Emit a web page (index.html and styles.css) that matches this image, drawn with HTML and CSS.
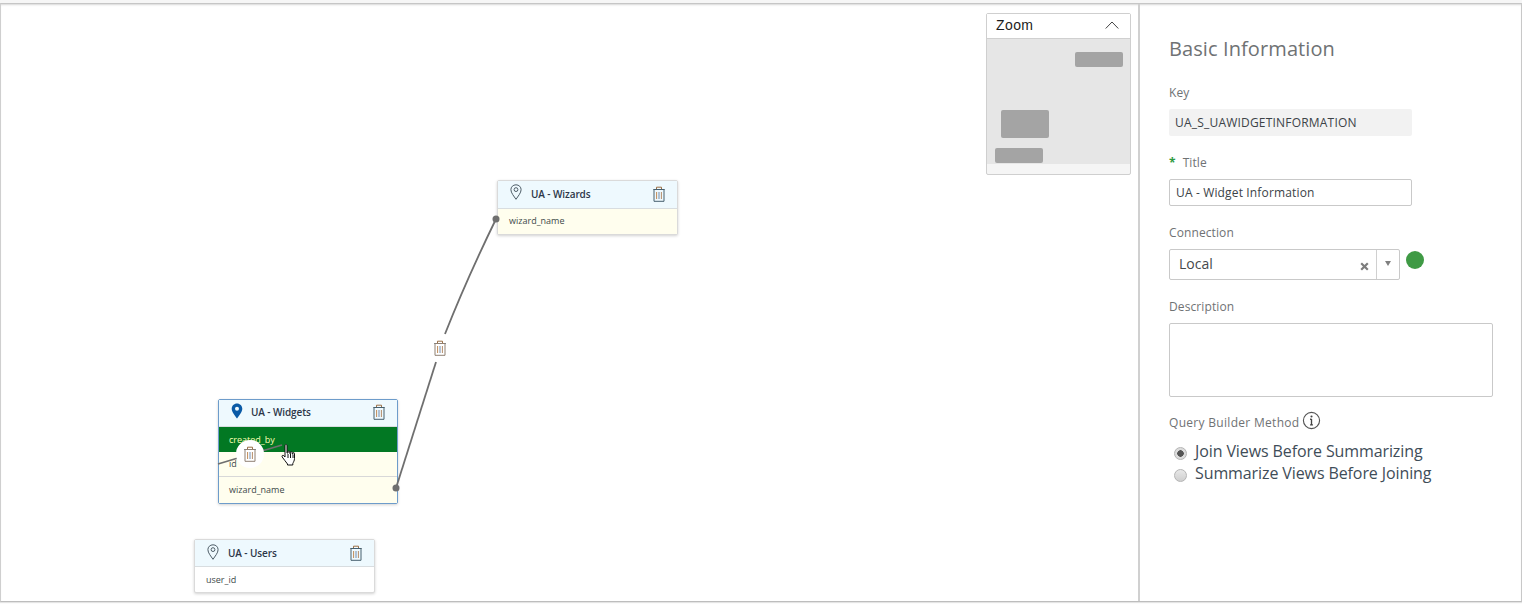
FILE: index.html
```html
<!DOCTYPE html>
<html lang="en">
<head>
<meta charset="utf-8">
<title>Query Builder</title>
<link rel="stylesheet" href="styles.css">
</head>
<body>
<svg width="0" height="0" class="defs" aria-hidden="true">
  <symbol id="trash" viewBox="0 0 14 16">
    <path d="M1 3.500h12" fill="none" stroke="#7f8c94" stroke-width="1"/>
    <path d="M4.500 3.500V1.200h5v2.300" fill="none" stroke="#9a6f45" stroke-width="1"/>
    <path d="M2 3.500h10v11.800H2z" fill="none" stroke="currentColor" stroke-width="1"/>
    <path d="M4.600 6v7" fill="none" stroke="#c08a55" stroke-width="1"/>
    <path d="M7 6v7" fill="none" stroke="#6f8cb0" stroke-width="1"/>
    <path d="M9.400 6v7" fill="none" stroke="#b58c6a" stroke-width="1"/>
  </symbol>
  <symbol id="pin" viewBox="0 0 12 16">
    <path d="M6 .8C3 .8.900 3 .900 5.700c0 3.200 3.200 6.700 5.100 9.600 1.900-2.900 5.100-6.400 5.100-9.600C11.100 3 9 .8 6 .8z" fill="none" stroke="currentColor" stroke-width="1"/>
    <circle cx="6" cy="5.600" r="1.900" fill="none" stroke="currentColor" stroke-width="1"/>
  </symbol>
</svg>
<div class="app">
  <main class="canvas">
    <section class="node node-wizards">
      <header class="node-head">
        <svg class="pin"><use href="#pin"/></svg>
        <span class="node-title">UA - Wizards</span>
        <svg class="trash"><use href="#trash"/></svg>
      </header>
      <div class="node-row tinted">wizard_name</div>
    </section>

    <section class="node node-widgets">
      <header class="node-head">
        <svg class="pin solid" viewBox="0 0 12 16"><path d="M6 .5C3 .5.700 2.800.700 5.700c0 3.300 3.300 6.800 5.300 9.800 2-3 5.300-6.500 5.300-9.800C11.300 2.800 9 .5 6 .5zm0 7.200a2 2 0 1 1 0-4 2 2 0 0 1 0 4z"/></svg>
        <span class="node-title">UA - Widgets</span>
        <svg class="trash"><use href="#trash"/></svg>
      </header>
      <div class="node-row active">created_by</div>
      <div class="node-row tinted">id</div>
      <div class="node-row tinted">wizard_name</div>
    </section>

    <section class="node node-users">
      <header class="node-head">
        <svg class="pin"><use href="#pin"/></svg>
        <span class="node-title">UA - Users</span>
        <svg class="trash"><use href="#trash"/></svg>
      </header>
      <div class="node-row">user_id</div>
    </section>

    <svg class="links" width="1139" height="597" viewBox="0 0 1139 597" aria-hidden="true">
      <path d="M496 215C478 252 460 292 445 330" class="link"/>
      <path d="M436 358L396 484" class="link"/>
      <path d="M218 460L238 454" class="link"/>
      <path d="M262 447L282 441" class="link"/>
      <circle cx="496" cy="215" r="3.500" class="dot"/>
      <circle cx="396" cy="484" r="3.500" class="dot"/>
    </svg>

    <span class="link-del link-del-a"><svg class="trash warm"><use href="#trash"/></svg></span>
    <span class="link-del link-del-b"><svg class="trash warm"><use href="#trash"/></svg></span>

    <svg class="cursor" viewBox="0 0 16 22" aria-hidden="true">
      <path d="M4 1.500c0-1.200 2-1.200 2 0V9l1 0V7.800c0-1 1.800-1 1.800 0V9.500l.8 0V8.500c0-1 1.700-1 1.700 0v1.500l.7 0V9.300c0-1 1.500-1 1.500.2v5c0 2-1 3.500-1.700 5v1.500H6.500V20C5 18 3 15.500 1.200 13c-.8-1.300.7-2.300 1.600-1.300L4 13z" fill="#fff" stroke="#111" stroke-width="1"/>
      <path d="M7 10v4M9.500 10v4M12 10.500v3.500" fill="none" stroke="#111" stroke-width="1"/>
    </svg>

    <aside class="zoom">
      <header class="zoom-head">
        <span>Zoom</span>
        <svg class="chevron" viewBox="0 0 14 8" aria-hidden="true"><path d="M.7 7.500L7 1l6.300 6.500" fill="none" stroke="#444" stroke-width="1"/></svg>
      </header>
      <div class="zoom-map">
        <i class="mini mini-a"></i>
        <i class="mini mini-b"></i>
        <i class="mini mini-c"></i>
      </div>
      <div class="zoom-foot"></div>
    </aside>
  </main>

  <aside class="panel">
    <h2 class="panel-title">Basic Information</h2>

    <div class="label label-key">Key</div>
    <div class="readonly">UA_S_UAWIDGETINFORMATION</div>

    <div class="label label-title"><span class="req">*</span><span class="label-text">Title</span></div>
    <input class="input" type="text" value="UA - Widget Information">

    <div class="label label-conn">Connection</div>
    <div class="conn-row">
      <div class="combo">
        <span class="combo-value">Local</span>
        <svg class="combo-clear" viewBox="0 0 9 9" aria-hidden="true"><path d="M1.200 1.200l6.600 6.600M7.800 1.200L1.200 7.800" fill="none" stroke="#7d7d7d" stroke-width="2.200"/></svg>
        <span class="combo-arrow"><i></i></span>
      </div>
      <span class="status"></span>
    </div>

    <div class="label label-desc">Description</div>
    <textarea class="textarea"></textarea>

    <div class="label label-method">
      Query Builder Method
      <svg class="info" viewBox="0 0 20 20" aria-hidden="true">
        <circle cx="10" cy="10" r="8.500" fill="none" stroke="#555" stroke-width="1.200"/>
        <path d="M10 8.500v6M8.500 8.700H10M8.500 14.600h3" fill="none" stroke="#444" stroke-width="1.400"/>
        <circle cx="10" cy="5.800" r="1.100" fill="#444"/>
      </svg>
    </div>
    <div class="radios">
      <div class="radio-row"><span class="radio on"></span>Join Views Before Summarizing</div>
      <div class="radio-row"><span class="radio"></span>Summarize Views Before Joining</div>
    </div>
  </aside>
</div>
</body>
</html>
```
FILE: styles.css
```css
* { box-sizing: border-box; }
html, body { margin: 0; height: 100%; background: #fff; overflow: hidden; }
body { font-family: "Open Sans", "Liberation Sans", sans-serif; color: #333; }
.defs { position: absolute; }

.app {
  display: flex;
  width: 1522px;
  height: 599px;
  margin-top: 3px;
  border-top: 1px solid #c6c6c6;
  border-bottom: 1px solid #bdbdbd;
  border-left: 1px solid #cfcfcf;
  border-right: 1px solid #c8c8c8;
  box-shadow: 0 -3px 0 #f6f6f6, inset 0 2px 2px -1px #d8d8d8, 0 1px 1px #e4e4e4;
}

/* free canvas */
.canvas { position: relative; flex: 1; min-width: 0; }
.links { position: absolute; left: -1px; top: 0; }
.link { fill: none; stroke: #6f6f6f; stroke-width: 1.800; }
.dot { fill: #6f6f6f; }

.node {
  position: absolute;
  width: 181px;
  background: #fff;
  border: 1px solid #dadada;
  border-radius: 2px;
  box-shadow: 0 1px 3px rgba(0, 0, 0, .18);
}
.node-wizards { left: 496px; top: 176px; }
.node-widgets { left: 217px; top: 395px; width: 180px; border-color: #6d9ccb; }
.node-users { left: 193px; top: 535px; }

.node-head {
  display: flex;
  align-items: center;
  height: 28px;
  padding: 0 11px 2px 12px;
  background: #eef9fe;
  border-bottom: 1px solid #d8dde0;
}
.node-widgets .node-head, .node-users .node-head { height: 27px; }
.node-users .node-head { padding-bottom: 0; }
.node-title { flex: 1; margin-left: 9px; font-size: 10px; letter-spacing: -.1px; font-weight: 600; color: #2c3648; }
.node-widgets .node-title { margin-left: 8px; }
.pin { width: 12px; height: 16px; margin-top: -3px; color: #4d5c66; }
.pin.solid { fill: #0a5aa6; fill-rule: evenodd; }
.trash { width: 14px; height: 16px; color: #46606f; }
.trash.warm { color: #8f8073; }

.node-row {
  display: flex;
  align-items: center;
  height: 25px;
  padding: 0 0 1px 11px;
  font-size: 9px;
  color: #404a4a;
  border-bottom: 1px solid #d8d8d8;
}
.node-wizards .node-row { padding-bottom: 3px; }
.node-widgets .node-row { padding-left: 10px; }
.node-row:last-child { border-bottom: 0; height: 25px; }
.node-widgets .node-row:last-child { height: 26px; }
.node-row.tinted { background: #fffeee; }
.node-row.active { background: #027823; color: #faffb0; border-bottom: 0; }

.link-del {
  position: absolute;
  display: flex;
  align-items: center;
  justify-content: center;
  border-radius: 50%;
  background: #fff;
}
.link-del-a { left: 425px; top: 330px; width: 28px; height: 28px; }
.link-del-b { left: 235px; top: 436px; width: 28px; height: 28px; }
.link-del .trash { width: 14px; height: 16px; }

.cursor { position: absolute; left: 280px; top: 440px; width: 16px; height: 22px; }

/* zoom box */
.zoom {
  position: absolute;
  left: 985px;
  top: 9px;
  width: 145px;
  height: 162px;
  display: flex;
  flex-direction: column;
  background: #f5f5f5;
  border: 1px solid #cfcfcf;
  border-radius: 2px;
}
.zoom-head {
  display: flex;
  align-items: center;
  justify-content: space-between;
  height: 25px;
  padding: 0 11px 2px 9px;
  background: #fff;
  border-bottom: 1px solid #d0d0d0;
  font-family: "Liberation Sans", sans-serif;
  font-size: 14px;
  letter-spacing: .4px;
  color: #1c1c1c;
}
.chevron { width: 14px; height: 8px; }
.zoom-map { position: relative; height: 125px; background: #e6e6e6; }
.zoom-foot { flex: 1; }
.mini { position: absolute; width: 48px; background: #a4a4a4; border-radius: 2px; }
.mini-a { left: 88px; top: 13px; height: 15px; }
.mini-b { left: 14px; top: 71px; height: 28px; }
.mini-c { left: 8px; top: 109px; height: 15px; }

/* right panel */
.panel {
  flex: none;
  width: 383px;
  padding: 0 0 0 29px;
  border-left: 2px solid #d0d0d0;
}
.panel-title { margin: 31px 0 0; font-size: 20px; line-height: 27px; letter-spacing: .1px; font-weight: 400; color: #6f7274; }
.label { font-size: 12px; line-height: 17px; letter-spacing: .1px; color: #6f7274; }
.label-key { margin-top: 22px; }
.label-title { margin-top: 18px; }
.label-text { margin-left: 7px; }
.label-conn { margin-top: 18px; }
.label-desc { margin-top: 18px; }
.req { color: #2f9a3f; font-weight: 700; }

.readonly {
  display: flex;
  align-items: center;
  width: 243px;
  height: 27px;
  margin-top: 8px;
  padding-left: 6px;
  background: #f2f2f2;
  border-radius: 2px;
  font-size: 12px;
  letter-spacing: .2px;
  color: #3c4348;
}
.input {
  display: block;
  width: 243px;
  height: 27px;
  margin-top: 8px;
  padding: 0 6px;
  background: #fff;
  border: 1px solid #c9c9c9;
  border-radius: 2px;
  font: 12px "Open Sans", sans-serif;
  letter-spacing: .15px;
  color: #3c4348;
  outline: 0;
}
.conn-row { display: flex; align-items: flex-start; margin-top: 8px; }
.combo {
  display: flex;
  align-items: center;
  width: 231px;
  height: 31px;
  background: #fff;
  border: 1px solid #c9c9c9;
  border-radius: 2px;
}
.combo-value { flex: 1; padding: 0 0 2px 9px; font-size: 14px; color: #45494c; }
.combo-clear { width: 9px; height: 9px; margin: 4px 7px 0 0; }
.combo-arrow { display: flex; align-items: center; justify-content: center; width: 23px; height: 100%; border-left: 1px solid #d0d0d0; }
.combo-arrow i { width: 0; height: 0; margin-bottom: 3px; border: 3.500px solid transparent; border-top: 5px solid #808080; border-bottom: 0; }
.status { width: 18px; height: 18px; margin: 2px 0 0 6px; border-radius: 50%; background: #3f9a45; }

.textarea {
  display: block;
  width: 324px;
  height: 74px;
  margin-top: 8px;
  background: #fff;
  border: 1px solid #c9c9c9;
  border-radius: 2px;
  resize: none;
  outline: 0;
}
.label-method { display: flex; align-items: center; gap: 3px; margin-top: 17px; letter-spacing: .3px; }
.info { width: 19px; height: 19px; margin-top: -5px; }

.radios { margin-top: 9px; padding-left: 5px; }
.radio-row { display: flex; align-items: center; height: 22px; font-size: 16px; letter-spacing: -.1px; color: #3f4d58; }
.radio {
  flex: none;
  width: 13px;
  height: 13px;
  margin: 4px 8px 0 0;
  border: 1px solid #b5b5b5;
  border-radius: 50%;
  background: linear-gradient(#e8e8e8, #cfcfcf);
}
.radio.on { background: radial-gradient(circle, #555 0 3px, #dcdcdc 3.500px); }
```
